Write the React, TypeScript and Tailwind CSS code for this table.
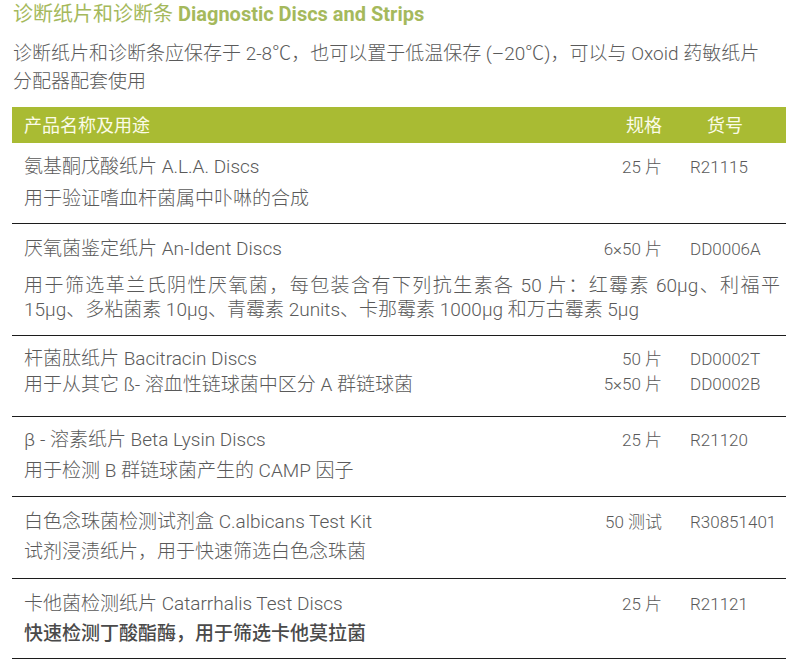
import React from 'react';

type Product = {
  title: string;
  desc: string;
  specs: string[];
  codes: string[];
  wide?: boolean;
  descClass: string;
  pad: string;
};

const products: Product[] = [
  {
    title: '氨基酮戊酸纸片 A.L.A. Discs',
    desc: '用于验证嗜血杆菌属中卟啉的合成',
    specs: ['25 片'],
    codes: ['R21115'],
    descClass: 'mt-[8px]',
    pad: 'pt-[12px] pb-[12px]',
  },
  {
    title: '厌氧菌鉴定纸片 An-Ident Discs',
    desc: '用于筛选革兰氏阴性厌氧菌，每包装含有下列抗生素各 50 片：红霉素 60μg、利福平 15μg、多粘菌素 10μg、青霉素 2units、卡那霉素 1000μg 和万古霉素 5μg',
    specs: ['6×50 片'],
    codes: ['DD0006A'],
    wide: true,
    descClass: 'mt-[12px] leading-[22px] text-justify pr-[6px]',
    pad: 'pt-[13px] pb-[13px]',
  },
  {
    title: '杆菌肽纸片 Bacitracin Discs',
    desc: '用于从其它 ß- 溶血性链球菌中区分 A 群链球菌',
    specs: ['50 片', '5×50 片'],
    codes: ['DD0002T', 'DD0002B'],
    descClass: 'mt-[2px]',
    pad: 'pt-[11px] pb-[19px]',
  },
  {
    title: 'β - 溶素纸片 Beta Lysin Discs',
    desc: '用于检测 B 群链球菌产生的 CAMP 因子',
    specs: ['25 片'],
    codes: ['R21120'],
    descClass: 'mt-[7px]',
    pad: 'pt-[11px] pb-[13px]',
  },
  {
    title: '白色念珠菌检测试剂盒 C.albicans Test Kit',
    desc: '试剂浸渍纸片，用于快速筛选白色念珠菌',
    specs: ['50 测试'],
    codes: ['R30851401'],
    descClass: 'mt-[6px]',
    pad: 'pt-[13px] pb-[14px]',
  },
  {
    title: '卡他菌检测纸片 Catarrhalis Test Discs',
    desc: '快速检测丁酸酯酶，用于筛选卡他莫拉菌',
    specs: ['25 片'],
    codes: ['R21121'],
    descClass: 'mt-[6px] font-medium text-[#4a4a4a]',
    pad: 'pt-[13px] pb-[12px]',
  },
];

const Columns: React.FC<{ specs: string[]; codes: string[] }> = ({ specs, codes }) => (
  <div className="flex text-[17px] leading-[25px] font-light shrink-0">
    <div className="w-[120px] text-right">
      {specs.map((s) => (
        <div key={s}>{s}</div>
      ))}
    </div>
    <div className="w-[124px] pl-[28px]">
      {codes.map((c) => (
        <div key={c}>{c}</div>
      ))}
    </div>
  </div>
);

export default function App() {
  return (
    <div
      className="w-[800px] h-[669px] bg-white overflow-hidden text-[#5a5a5a]"
      style={{ fontFamily: '"Helvetica Neue", Roboto, "Noto Sans CJK SC", sans-serif' }}
    >
      <h1 className="pl-[13px] pt-[2px] text-[20px] leading-[24px] text-[#a5b95c] font-normal">
        诊断纸片和诊断条 <span className="font-bold">Diagnostic Discs and Strips</span>
      </h1>
      <p className="pl-[13px] mt-[14px] text-[19px] leading-[28px] font-light">
        诊断纸片和诊断条应保存于 2-8℃，也可以置于低温保存 (–20℃)，可以与 Oxoid 药敏纸片
        <br />
        分配器配套使用
      </p>

      <div className="ml-[12px] w-[774px] mt-[11px]">
        <div className="flex items-center h-[36px] bg-[#a9bb33] text-[#fbfbe8] text-[18px]">
          <div className="flex-1 pl-[12px]">产品名称及用途</div>
          <div className="w-[120px] text-right">规格</div>
          <div className="w-[124px] pl-[45px]">货号</div>
        </div>

        {products.map((p) =>
          p.wide ? (
            <div key={p.codes[0]} className={`border-b border-[#1c1c1c] pl-[12px] ${p.pad}`}>
              <div className="flex">
                <div className="flex-1 text-[19px] leading-[24px] font-light">{p.title}</div>
                <Columns specs={p.specs} codes={p.codes} />
              </div>
              <div className={`text-[19px] leading-[24px] font-light ${p.descClass}`}>{p.desc}</div>
            </div>
          ) : (
            <div key={p.codes[0]} className={`flex border-b border-[#1c1c1c] ${p.pad}`}>
              <div className="flex-1 pl-[12px] pr-[6px] font-light">
                <div className="text-[19px] leading-[24px]">{p.title}</div>
                <div className={`text-[19px] leading-[24px] ${p.descClass}`}>{p.desc}</div>
              </div>
              <Columns specs={p.specs} codes={p.codes} />
            </div>
          )
        )}
      </div>
    </div>
  );
}
